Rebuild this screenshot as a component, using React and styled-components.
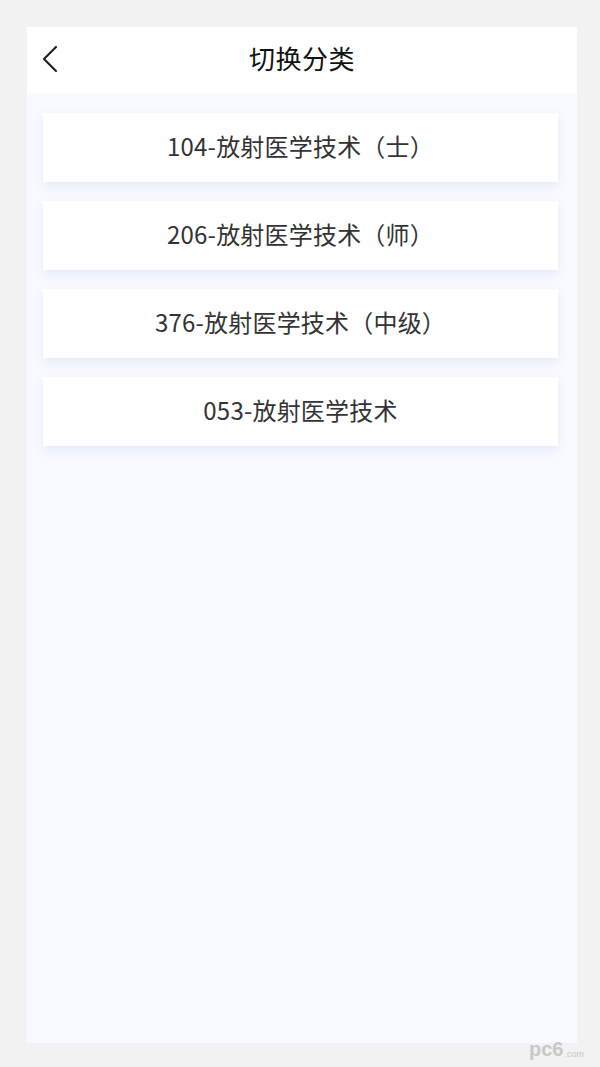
import React from 'react';
import styled, { createGlobalStyle } from 'styled-components';

const GlobalStyle = createGlobalStyle`
  html, body {
    margin: 0;
    padding: 0;
    background: #f2f2f2;
    font-family: "Noto Sans CJK SC", "Noto Sans", sans-serif;
  }
`;

const Page = styled.div`
  width: 600px;
  height: 1067px;
  box-sizing: border-box;
  padding: 27px 23px 24px 27px;
  display: flex;
  flex-direction: column;
  position: relative;
`;

const Screen = styled.div`
  flex: 1;
  display: flex;
  flex-direction: column;
  background: #f9faff;
`;

const Header = styled.div`
  height: 66px;
  background: #ffffff;
  display: flex;
  align-items: center;
  justify-content: center;
  position: relative;
`;

const BackButton = styled.div`
  position: absolute;
  left: 11px;
  top: 17px;
  width: 24px;
  height: 30px;
  display: flex;
  align-items: center;
  justify-content: center;
`;

const Title = styled.h1`
  margin: 0 0 6px;
  font-size: 26px;
  font-weight: 400;
  color: #111;
  letter-spacing: 0.5px;
`;

const List = styled.div`
  display: flex;
  flex-direction: column;
  gap: 19px;
  padding: 20px 19px 0 16px;
`;

const Card = styled.div`
  height: 69px;
  box-sizing: border-box;
  padding-bottom: 4px;
  background: #ffffff;
  display: flex;
  align-items: center;
  justify-content: center;
  font-size: 24px;
  letter-spacing: 0.2px;
  color: #333;
  box-shadow: 0 4px 10px rgba(200, 215, 240, 0.45);
`;

const Watermark = styled.div`
  position: absolute;
  right: 16px;
  bottom: 8px;
  display: flex;
  align-items: flex-end;
  gap: 1px;
  color: #c8c8c8;
  font-family: "Liberation Sans", sans-serif;
  font-weight: bold;
`;

const Pc = styled.span`
  font-size: 20px;
  line-height: 20px;
`;

const Com = styled.span`
  font-size: 9px;
  font-weight: normal;
  line-height: 10px;
`;

const items = [
  '104-放射医学技术（士）',
  '206-放射医学技术（师）',
  '376-放射医学技术（中级）',
  '053-放射医学技术',
];

export default function App() {
  return (
    <>
      <GlobalStyle />
      <Page>
        <Screen>
          <Header>
            <BackButton>
              <svg width="18" height="28" viewBox="0 0 18 28" fill="none">
                <path d="M15 2 L3 14 L15 26" stroke="#222" strokeWidth="2.2" strokeLinecap="round" strokeLinejoin="round" />
              </svg>
            </BackButton>
            <Title>切换分类</Title>
          </Header>
          <List>
            {items.map((t) => (
              <Card key={t}>{t}</Card>
            ))}
          </List>
        </Screen>
        <Watermark>
          <Pc>pc6</Pc>
          <Com>.com</Com>
        </Watermark>
      </Page>
    </>
  );
}
